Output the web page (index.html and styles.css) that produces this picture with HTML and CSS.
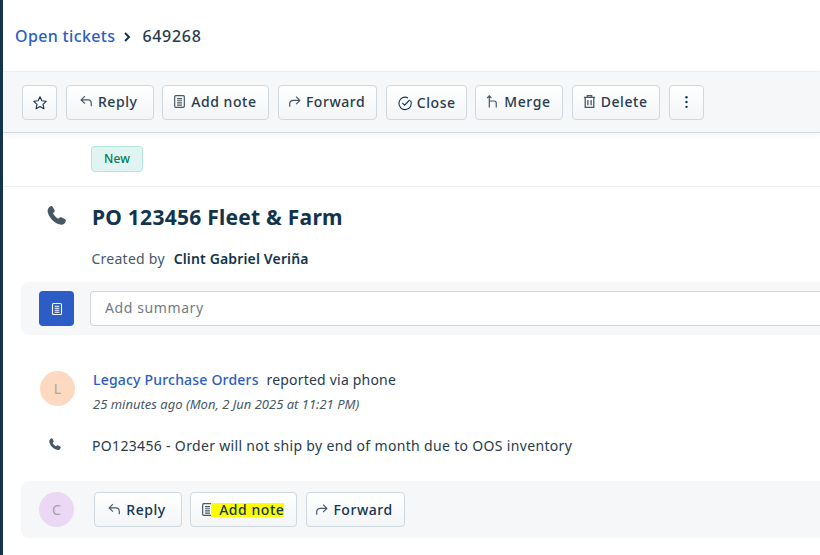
FILE: index.html
```html
<!doctype html>
<html lang="en">
<head>
	<meta charset="UTF-8">
	<title>Ticket 649268</title>
	<link rel="stylesheet" href="styles.css">
</head>
<body>
	<div class="page">
		<div class="crumbs">
			<a class="crumb_link">Open tickets</a>
			<svg class="crumb_arrow" viewBox="0 0 10 12" width="10" height="12"><path d="M3 2l4 4-4 4" fill="none" stroke="#12344d" stroke-width="2"/></svg>
			<span class="crumb_id">649268</span>
		</div>

		<div class="toolbar">
			<span class="btn btn_icon">
				<svg class="star" viewBox="0 0 16 16" width="16" height="16"><path d="M8 1.800l1.900 4 4.300.5-3.200 3 .9 4.400L8 11.500l-3.900 2.200.9-4.400-3.200-3 4.300-.5z" fill="none" stroke="#12344d" stroke-width="1.100" stroke-linejoin="round"/></svg>
			</span>
			<span class="btn btn_reply"><svg viewBox="0 0 14 14" width="14" height="14"><path d="M5.500 2L2 5.500 5.500 9M2 5.500h6.500c2 0 3 1.300 3 3.500v2.500" fill="none" stroke="#475867" stroke-width="1.100"/></svg>Reply</span>
			<span class="btn btn_note"><svg viewBox="0 0 14 14" width="14" height="14"><path d="M3.500 1.500h7a1 1 0 0 1 1 1v9a1 1 0 0 1-1 1h-7a1 1 0 0 1-1-1v-9a1 1 0 0 1 1-1zM4.700 4.300h4.600M4.700 6.300h4.600M4.700 8.300h4.600M4.700 10.300h4.600" fill="none" stroke="#475867" stroke-width="1.100"/></svg>Add note</span>
			<span class="btn btn_forward"><svg viewBox="0 0 14 14" width="14" height="14"><path d="M8.500 2.500L12 6 8.500 9.500M12 6H6C3.800 6 2.500 7.300 2.500 9.500V12" fill="none" stroke="#475867" stroke-width="1.100"/></svg>Forward</span>
			<span class="btn btn_close"><svg class="low" viewBox="0 0 16 16" width="16" height="16"><path d="M13.600 5.500A6.200 6.200 0 1 1 11 2.900M5.300 7.800l2.300 2.400 5-5.200" fill="none" stroke="#12344d" stroke-width="1.100"/></svg>Close</span>
			<span class="btn btn_merge"><svg viewBox="0 0 14 14" width="14" height="14"><path d="M4 12.500V2M2 3.700L4 1.700l2 2M4 6.500h4.500c1.200 0 2 .7 2 2v4" fill="none" stroke="#475867" stroke-width="1.100"/></svg>Merge</span>
			<span class="btn btn_delete"><svg viewBox="0 0 14 14" width="14" height="14"><path d="M1.800 3.200h10.400M5 3V1.500h4V3M3 3.200v9.300h8V3.200M5.500 5.500v5M8.500 5.500v5" fill="none" stroke="#475867" stroke-width="1.200"/></svg>Delete</span>
			<span class="btn btn_icon">
				<svg viewBox="0 0 4 14" width="4" height="14"><circle cx="2" cy="3" r="1.100" fill="#12344d"/><circle cx="2" cy="7.500" r="1.100" fill="#12344d"/><circle cx="2" cy="12" r="1.100" fill="#12344d"/></svg>
			</span>
		</div>

		<div class="status_row">
			<span class="tag_new">New</span>
		</div>

		<div class="subject">
			<svg class="subject_icon" viewBox="0 0 24 24" width="24" height="24"><path d="M6.600 2.300c.8-.4 1.700-.2 2.200.6l1.700 3c.4.700.3 1.500-.2 2.100L9 9.300c.9 2 3 4.300 5.300 5.500l1.400-1.200c.6-.5 1.400-.6 2.100-.2l3.300 1.900c.8.500 1 1.400.6 2.200-.8 1.800-2.300 3.500-4.200 3.300C10.500 19.900 4.300 13 3.600 7.200c-.2-2 1.300-4 3-4.900z" fill="#475867"/></svg>
			<h1 class="subject_title">PO 123456 Fleet &amp; Farm</h1>
		</div>
		<div class="created">Created by <b class="created_name">Clint Gabriel Veriña</b></div>

		<div class="panel summary">
			<span class="summary_icon"><svg viewBox="0 0 14 14" width="14" height="14"><path d="M3.500 1.500h7a1 1 0 0 1 1 1v9a1 1 0 0 1-1 1h-7a1 1 0 0 1-1-1v-9a1 1 0 0 1 1-1zM4.700 4.300h4.600M4.700 6.300h4.600M4.700 8.300h4.600M4.700 10.300h4.600" fill="none" stroke="#fff" stroke-width="1.100"/></svg></span>
			<div class="summary_input">Add summary</div>
		</div>

		<div class="convo">
			<span class="avatar avatar_l">L</span>
			<div class="convo_text">
				<div class="convo_head"><a class="crumb_link convo_link">Legacy Purchase Orders</a> reported via phone</div>
				<div class="convo_time">25 minutes ago (Mon, 2 Jun 2025 at 11:21 PM)</div>
			</div>
		</div>

		<div class="message">
			<svg class="message_icon" viewBox="0 0 24 24" width="15" height="15"><path d="M6.600 2.300c.8-.4 1.700-.2 2.200.6l1.700 3c.4.700.3 1.500-.2 2.100L9 9.300c.9 2 3 4.300 5.300 5.500l1.400-1.200c.6-.5 1.400-.6 2.100-.2l3.300 1.900c.8.500 1 1.400.6 2.200-.8 1.800-2.300 3.500-4.200 3.300C10.500 19.900 4.300 13 3.600 7.200c-.2-2 1.300-4 3-4.900z" fill="#475867"/></svg>
			<span>PO123456 - Order will not ship by end of month due to OOS inventory</span>
		</div>

		<div class="panel reply_bar">
			<span class="avatar avatar_c">C</span>
			<div class="reply_btns">
				<span class="btn btn_reply"><svg viewBox="0 0 14 14" width="14" height="14"><path d="M5.500 2L2 5.500 5.500 9M2 5.500h6.500c2 0 3 1.300 3 3.500v2.500" fill="none" stroke="#475867" stroke-width="1.100"/></svg>Reply</span>
				<span class="btn btn_note"><svg viewBox="0 0 14 14" width="14" height="14"><path d="M3.500 1.500h7a1 1 0 0 1 1 1v9a1 1 0 0 1-1 1h-7a1 1 0 0 1-1-1v-9a1 1 0 0 1 1-1zM4.700 4.300h4.600M4.700 6.300h4.600M4.700 8.300h4.600M4.700 10.300h4.600" fill="none" stroke="#475867" stroke-width="1.100"/></svg><mark class="mark">Add note</mark></span>
				<span class="btn btn_forward"><svg viewBox="0 0 14 14" width="14" height="14"><path d="M8.500 2.500L12 6 8.500 9.500M12 6H6C3.800 6 2.500 7.300 2.500 9.500V12" fill="none" stroke="#475867" stroke-width="1.100"/></svg>Forward</span>
			</div>
		</div>
	</div>
</body>
</html>
```

FILE: styles.css
```css
*{
	margin: 0;
	padding: 0;
	box-sizing: border-box;
}
html,body{
	height: 100%;
	overflow: hidden;
}
body{
	background: #fff;
	color: #12344d;
	font-family: "Noto Sans", "Open Sans", sans-serif;
	font-size: 14px;
}
.page{
	height: 555px;
	border-left: 3px solid #12344d;
	overflow: hidden;
}

.crumbs{
	display: flex;
	align-items: center;
	height: 71px;
	padding-left: 12px;
	font-size: 16px;
	font-weight: 500;
	letter-spacing: 0.35px;
}
.crumb_link{
	color: #2c5cc5;
}
.crumb_arrow{
	margin: 2px 10px 0 7px;
}
.crumb_id{
	color: #283b4c;
	letter-spacing: 0.7px;
}

.toolbar{
	display: flex;
	align-items: center;
	gap: 8.7px;
	height: 62px;
	padding: 0 0 0 19px;
	background: #f5f7f9;
	border-top: 1px solid #ebeff3;
	border-bottom: 1px solid #cfd7df;
	box-shadow: 0 2px 6px rgba(18,52,77,0.06);
}
.btn{
	display: inline-flex;
	align-items: center;
	justify-content: center;
	gap: 4px;
	flex: none;
	height: 35px;
	padding: 0 3px 2px 0;
	background: linear-gradient(#fff, #f3f5f7);
	border: 1px solid #cfd7df;
	border-radius: 4px;
	color: #283b4c;
	font-size: 14px;
	font-weight: 500;
	letter-spacing: 0.55px;
}
.btn svg{
	width: 15px;
	height: 15px;
}
.btn .star,.btn .low{
	width: 16px;
	height: 16px;
}
.btn_icon{ width: 35px; padding: 0 0 2px; }
.btn_reply{ width: 88px; }
.btn_note{ width: 107px; }
.btn_forward{ width: 99px; }
.btn_close{ width: 81px; padding: 0; }
.btn_merge{ width: 88px; }
.btn_delete{ width: 88px; }
.btn .star{
	margin-top: 3px;
}
.low{
	margin-top: 2px;
}

.status_row{
	display: flex;
	align-items: center;
	height: 54px;
	padding: 0 0 2px 88px;
	border-bottom: 1px solid #ebeff3;
}
.tag_new{
	display: flex;
	align-items: center;
	justify-content: center;
	width: 52px;
	height: 26px;
	background: #e0f5f1;
	border: 1px solid #b4e5da;
	border-radius: 4px;
	color: #00795b;
	font-size: 12px;
	font-weight: 500;
	letter-spacing: 0.2px;
}

.subject{
	display: flex;
	align-items: center;
	height: 62px;
}
.subject_icon{
	margin: 0 0 4px 41px;
}
.subject_title{
	margin: 0 0 2px 24px;
	font-size: 21px;
	font-weight: 700;
	line-height: 28px;
	letter-spacing: 0.25px;
	color: #12344d;
}
.created{
	padding-left: 88.500px;
	height: 33px;
	line-height: 20px;
	letter-spacing: 0.25px;
	color: #475867;
}
.created_name{
	margin-left: 5px;
	font-weight: 600;
	letter-spacing: 0.15px;
	color: #12344d;
}

.panel{
	display: flex;
	align-items: center;
	margin-left: 18px;
	background: #f5f7f9;
	border-radius: 8px 0 0 8px;
}
.summary{
	height: 53px;
	padding-left: 18px;
}
.summary_icon{
	display: flex;
	align-items: center;
	justify-content: center;
	flex: none;
	width: 35px;
	height: 35px;
	background: #2c5cc5;
	border-radius: 4px;
}
.summary_input{
	flex: 1;
	height: 35px;
	margin-left: 16px;
	padding-left: 14px;
	background: #fff;
	border: 1px solid #cfd7df;
	border-right: 0;
	border-radius: 4px 0 0 4px;
	color: #6f7c87;
	line-height: 32px;
	letter-spacing: 0.6px;
}

.avatar{
	display: flex;
	align-items: center;
	justify-content: center;
	flex: none;
	width: 35px;
	height: 35px;
	border-radius: 50%;
	font-size: 14px;
}
.avatar_l{
	background: #fdd9c1;
	color: #b4a398;
}
.avatar_c{
	background: #ead8f4;
	color: #a99ab2;
}
.convo{
	display: flex;
	align-items: flex-start;
	margin-top: 36px;
	padding-left: 37px;
}
.convo_text{
	margin-left: 18px;
	margin-top: -1px;
}
.convo_head{
	line-height: 20px;
	letter-spacing: 0.2px;
	color: #283b4c;
}
.convo_link{
	margin-right: 4px;
	font-weight: 500;
}
.convo_time{
	margin-top: 6px;
	line-height: 17px;
	font-size: 13px;
	font-style: italic;
	color: #475867;
}
.message{
	display: flex;
	align-items: center;
	height: 20px;
	margin-top: 23px;
	padding-left: 44px;
	line-height: 20px;
	letter-spacing: 0.33px;
	color: #283b4c;
}
.message_icon{
	flex: none;
	margin-right: 30px;
	margin-bottom: 3px;
}
.reply_bar{
	height: 57px;
	margin-top: 25px;
	padding-left: 18px;
}
.reply_btns{
	display: flex;
	gap: 8.300px;
	margin-left: 20px;
}
.reply_btns .btn{
	padding-bottom: 0;
	color: #12344d;
}
.mark{
	margin-left: -8px;
	padding-left: 8px;
	background: #ffff00;
	color: #12344d;
	line-height: 14px;
}
```
